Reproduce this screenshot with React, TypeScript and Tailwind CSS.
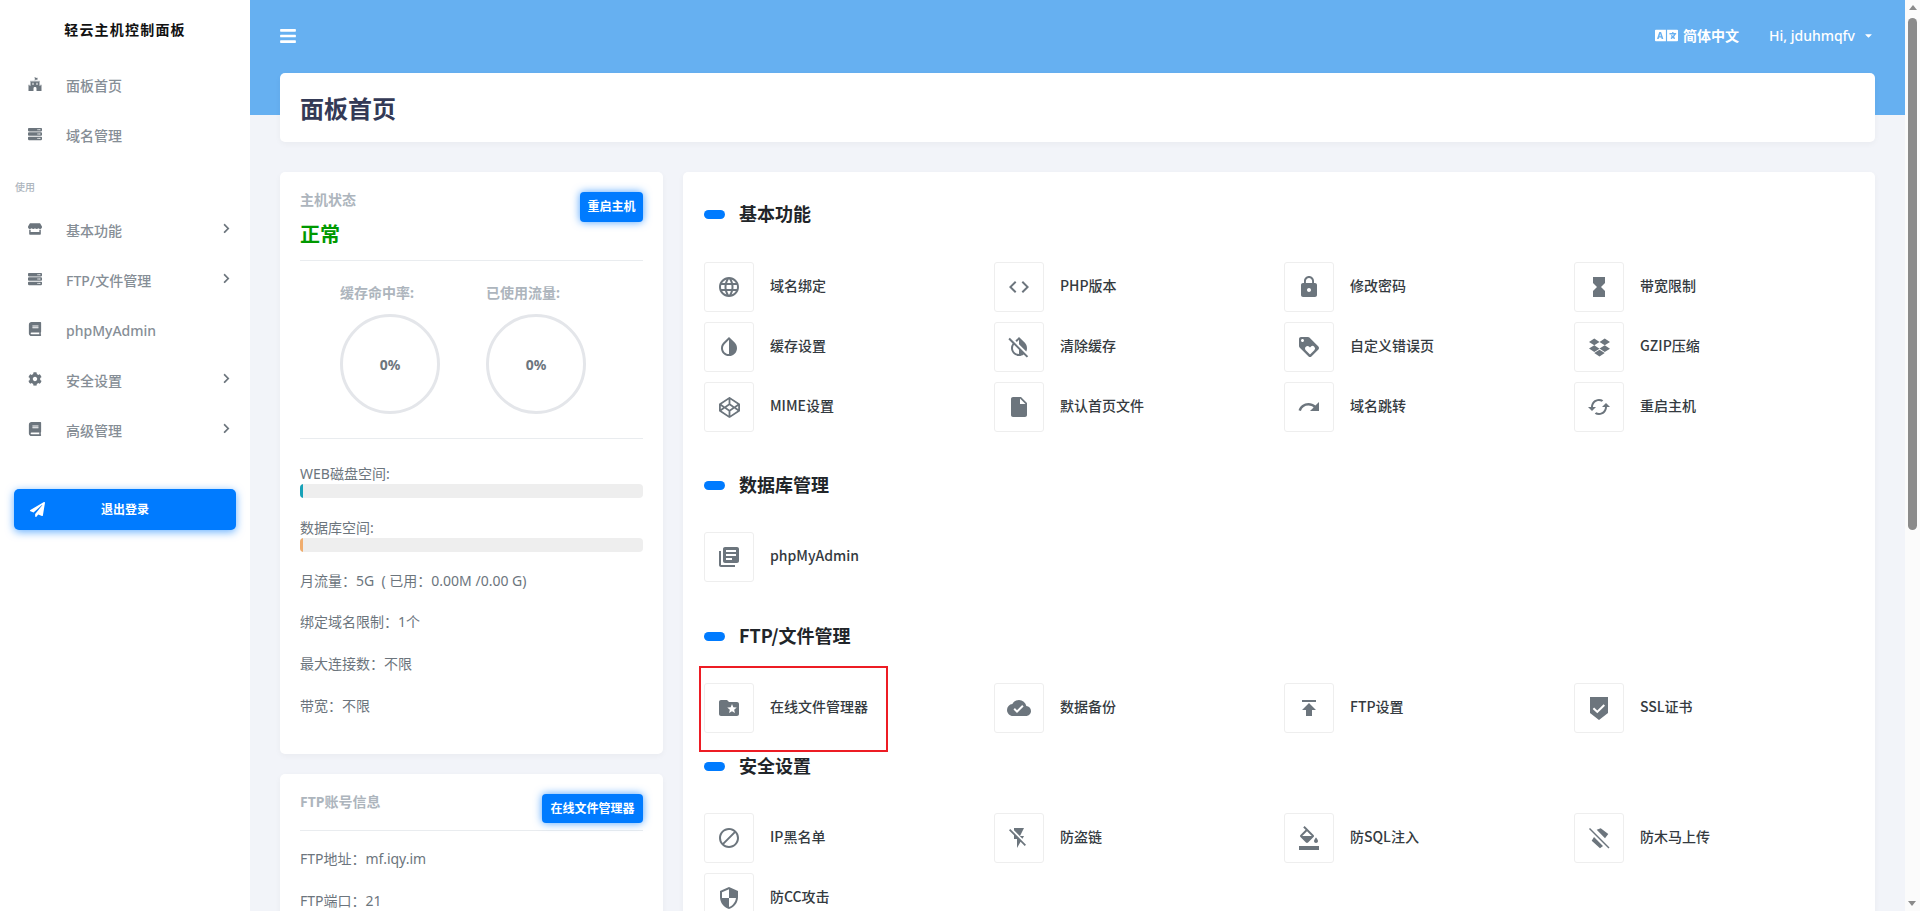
import type { ReactNode } from 'react'
import {
  FaFortAwesome, FaServer, FaStore, FaBook, FaCog, FaPaperPlane, FaBars, FaChevronRight,
  FaLanguage, FaCaretDown, FaDropbox, FaCodepen,
} from 'react-icons/fa'
import {
  MdLanguage, MdCode, MdLock, MdHourglassFull, MdInvertColors, MdInvertColorsOff, MdLoyalty,
  MdInsertDriveFile, MdRedo, MdCached, MdLibraryBooks, MdFolderSpecial, MdCloudDone, MdPublish,
  MdBlock, MdFlashOff, MdFormatColorFill, MdSecurity,
} from 'react-icons/md'

type Item = { label: string; icon: ReactNode }

const ic = 'text-[24px]'

// flat top shield with a check, not in the icon packs
const SslIcon = () => (
  <svg width="24" height="24" viewBox="0 0 24 24" fill="currentColor">
    <path fillRule="evenodd" d="M3 1h18v16l-9 7-9-7V1zm2.7 12l4.6 4.3L18 9.7l-1.4-1.4-6.3 6.2-3.2-3z" />
  </svg>
)

// bars crossed by a diagonal slash
const TrojanIcon = () => (
  <svg width="24" height="24" viewBox="0 0 24 24" fill="currentColor">
    <path d="M3 2l19.5 19.5-1 1L2 3z" />
    <path d="M9.7 3.7l4-1.4 7.6 5.7-3.3 4.3zM4.7 14.7L7 11l9 9-3 2.3z" />
  </svg>
)

const BASIC: Item[] = [
  { label: '域名绑定', icon: <MdLanguage className={ic} /> },
  { label: 'PHP版本', icon: <MdCode className={ic} /> },
  { label: '修改密码', icon: <MdLock className={ic} /> },
  { label: '带宽限制', icon: <MdHourglassFull className={ic} /> },
  { label: '缓存设置', icon: <MdInvertColors className={ic} /> },
  { label: '清除缓存', icon: <MdInvertColorsOff className={ic} /> },
  { label: '自定义错误页', icon: <MdLoyalty className={ic} /> },
  { label: 'GZIP压缩', icon: <FaDropbox className="text-[21px]" /> },
  { label: 'MIME设置', icon: <FaCodepen className="text-[21px]" /> },
  { label: '默认首页文件', icon: <MdInsertDriveFile className={ic} /> },
  { label: '域名跳转', icon: <MdRedo className={ic} /> },
  { label: '重启主机', icon: <MdCached className={ic} /> },
]

const DB: Item[] = [{ label: 'phpMyAdmin', icon: <MdLibraryBooks className={ic} /> }]

const FTP: Item[] = [
  { label: '在线文件管理器', icon: <MdFolderSpecial className={ic} /> },
  { label: '数据备份', icon: <MdCloudDone className={ic} /> },
  { label: 'FTP设置', icon: <MdPublish className={ic} /> },
  { label: 'SSL证书', icon: <SslIcon /> },
]

const SAFE: Item[] = [
  { label: 'IP黑名单', icon: <MdBlock className={ic} /> },
  { label: '防盗链', icon: <MdFlashOff className={ic} /> },
  { label: '防SQL注入', icon: <MdFormatColorFill className={ic} /> },
  { label: '防木马上传', icon: <TrojanIcon /> },
  { label: '防CC攻击', icon: <MdSecurity className={ic} /> },
]

const NAV_TOP = [
  { label: '面板首页', icon: <FaFortAwesome /> },
  { label: '域名管理', icon: <FaServer /> },
]

const NAV_USE = [
  { label: '基本功能', icon: <FaStore />, arrow: true },
  { label: 'FTP/文件管理', icon: <FaServer />, arrow: true },
  { label: 'phpMyAdmin', icon: <FaBook /> },
  { label: '安全设置', icon: <FaCog />, arrow: true },
  { label: '高级管理', icon: <FaBook />, arrow: true },
]

function NavRow({ label, icon, arrow }: { label: string; icon: ReactNode; arrow?: boolean }) {
  return (
    <div className="flex h-[50px] items-center pl-[28px] pr-[18px] text-[14px] font-medium text-[#868e96]">
      <span className="flex w-[38px] shrink-0 -translate-y-[1px] text-[14px] text-[#6c757d]">{icon}</span>
      <span className="flex-1">{label}</span>
      {arrow && <FaChevronRight className="-translate-y-[2px] text-[11px] text-[#6c757d]" />}
    </div>
  )
}

function Section({ title, items, className, headClass = 'mb-[33px]' }: { title: string; items: Item[]; className?: string; headClass?: string }) {
  return (
    <section className={className}>
      <div className={`flex h-[28px] items-center gap-[14px] ${headClass}`}>
        <span className="h-[9px] w-[21px] rounded-full bg-[#007bff]" />
        <h3 className="-translate-y-[1px] font-['Noto_Sans_CJK_SC',sans-serif] text-[18px] font-bold text-[#212529]">{title}</h3>
      </div>
      <div className="grid grid-cols-[290px_290px_290px_290px] gap-y-[10px]">
        {items.map(it => (
          <div key={it.label} className="flex items-center gap-[16px]">
            <span className="flex h-[50px] w-[50px] items-center justify-center rounded-[3px] border border-[#eeeeee] text-[#6c757d]">
              {it.icon}
            </span>
            <span className="-translate-y-[2px] font-['Noto_Sans_CJK_SC',sans-serif] text-[14px] font-medium text-[#343a40]">{it.label}</span>
          </div>
        ))}
      </div>
    </section>
  )
}

function Ring({ title }: { title: string }) {
  return (
    <div className="w-[146px]">
      <div className="text-[14px] font-bold text-[#adb5bd]">{title}</div>
      <div className="mt-[11px] flex h-[100px] w-[100px] items-center justify-center rounded-full border-[3px] border-[#e4e6ea] text-[14px] font-bold text-[#6c757d]">
        0%
      </div>
    </div>
  )
}

function BlueBtn({ children, className }: { children: ReactNode; className?: string }) {
  return (
    <button className={`rounded-[4px] bg-[#007bff] text-[12px] font-bold text-white shadow-[0_0_8px_rgba(0,123,255,0.7)] ${className ?? ''}`}>
      {children}
    </button>
  )
}

export default function App() {
  return (
    <div className="relative flex h-[911px] overflow-hidden bg-[#f2f4f9] font-['Noto_Sans','Noto_Sans_CJK_SC',sans-serif]">
      {/* sidebar */}
      <aside className="w-[250px] shrink-0 bg-white">
        <div className="flex h-[60px] items-center justify-center pb-[1px] text-[14px] font-bold tracking-[1.2px] text-[#111]">
          轻云主机控制面板
        </div>
        <nav>
          {NAV_TOP.map(n => <NavRow key={n.label} {...n} />)}
          <div className="pb-[11px] pl-[15px] pt-[20px] text-[10px] font-medium leading-[14px] text-[#adb5bd]">使用</div>
          {NAV_USE.map(n => <NavRow key={n.label} {...n} />)}
        </nav>
        <button className="relative mx-[14px] mt-[34px] flex h-[41px] w-[222px] items-center justify-center rounded-[5px] bg-[#007bff] text-[12px] font-bold text-white shadow-[0_2px_8px_rgba(0,123,255,0.6)]">
          <FaPaperPlane className="absolute left-[16px] text-[15px]" />
          退出登录
        </button>
      </aside>

      {/* main */}
      <main className="w-[1655px] shrink-0">
        <div className="h-[115px] bg-[#66b0f1]">
          <div className="flex h-[71px] items-center pl-[29px] pr-[31px] text-white">
            <FaBars className="text-[18px]" />
            <div className="ml-auto flex items-center text-[14px] font-bold">
              <FaLanguage className="mr-[5px] text-[23px]" />
              简体中文
            </div>
            <div className="ml-[30px] flex items-center text-[14px] font-medium">
              Hi, jduhmqfv
              <FaCaretDown className="ml-[8px] text-[11px]" />
            </div>
          </div>
        </div>

        <div className="px-[30px]">
          <div className="-mt-[42px] flex h-[69px] items-center rounded-[5px] bg-white pl-[20px] pt-[3px] text-[24px] font-semibold text-[#343a56] shadow-[0_2px_6px_rgba(0,0,0,0.04)]">
            面板首页
          </div>

          <div className="mt-[30px] flex items-start gap-[20px]">
            <div className="w-[383px] shrink-0">
              <div className="h-[582px] rounded-[5px] bg-white px-[20px] pt-[18px] shadow-[0_2px_6px_rgba(0,0,0,0.04)]">
                <div className="flex h-[71px] justify-between border-b border-[#e9ecef]">
                  <div>
                    <div className="text-[14px] font-bold leading-[20px] text-[#adb5bd]">主机状态</div>
                    <div className="mt-[11px] text-[20px] font-bold leading-[28px] text-[#009900]">正常</div>
                  </div>
                  <BlueBtn className="mt-[2px] h-[30px] w-[63px]">重启主机</BlueBtn>
                </div>
                <div className="flex h-[178px] border-b border-[#e9ecef] pl-[40px] pt-[21px]">
                  <Ring title="缓存命中率:" />
                  <Ring title="已使用流量:" />
                </div>
                <div className="pt-[24px] text-[14px] leading-[21px] text-[#6c757d]">
                  <div>WEB磁盘空间:</div>
                  <div className="h-[14px] overflow-hidden rounded-[4px] bg-[#eeeeee]">
                    <div className="h-full w-[3px] bg-[#17a2b8]" />
                  </div>
                  <div className="mt-[19px]">数据库空间:</div>
                  <div className="h-[14px] overflow-hidden rounded-[4px] bg-[#eeeeee]">
                    <div className="h-full w-[3px] bg-[#f0ad6e]" />
                  </div>
                  <div className="mt-[18px]">月流量：5G &nbsp;( 已用：0.00M /0.00 G)</div>
                  <div className="mt-[20px]">绑定域名限制：1个</div>
                  <div className="mt-[21px]">最大连接数：不限</div>
                  <div className="mt-[21px]">带宽：不限</div>
                </div>
              </div>

              <div className="mt-[20px] h-[300px] rounded-[5px] bg-white px-[20px] pt-[20px] shadow-[0_2px_6px_rgba(0,0,0,0.04)]">
                <div className="flex h-[37px] justify-between border-b border-[#e9ecef]">
                  <div className="text-[14px] font-bold leading-[16px] text-[#adb5bd]">FTP账号信息</div>
                  <BlueBtn className="h-[29px] w-[101px]">在线文件管理器</BlueBtn>
                </div>
                <div className="pt-[17px] text-[14px] leading-[21px] text-[#6c757d]">
                  <div>FTP地址：mf.iqy.im</div>
                  <div className="mt-[21px]">FTP端口：21</div>
                </div>
              </div>
            </div>

            <div className="h-[900px] flex-1 rounded-[5px] bg-white pl-[21px] pt-[28px] shadow-[0_2px_6px_rgba(0,0,0,0.04)]">
              <Section title="基本功能" items={BASIC} headClass="mb-[34px]" />
              <Section title="数据库管理" items={DB} className="mt-[39px]" />
              <Section title="FTP/文件管理" items={FTP} className="mt-[40px]" />
              <Section title="安全设置" items={SAFE} className="mt-[19px]" />
            </div>
          </div>
        </div>
      </main>

      {/* scrollbar */}
      <div className="relative w-[15px] shrink-0 bg-[#fbfbfb]">
        <div className="mx-auto mt-[5px] h-0 w-0 border-x-[4px] border-b-[5px] border-x-transparent border-b-[#8b8b8b]" />
        <div className="mx-auto mt-[8px] h-[512px] w-[9px] rounded-full bg-[#8b8b8b]" />
        <div className="absolute bottom-[5px] left-[3px] h-0 w-0 border-x-[4px] border-t-[5px] border-x-transparent border-t-[#8b8b8b]" />
      </div>

      {/* annotation */}
      <div className="absolute left-[699px] top-[666px] h-[86px] w-[189px] border-2 border-[#ed1c24]" />
    </div>
  )
}
